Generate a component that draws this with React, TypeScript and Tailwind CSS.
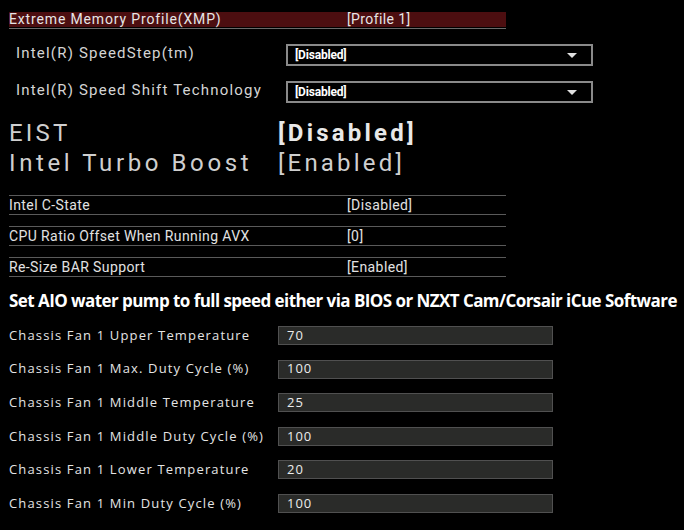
const biosFont = { fontFamily: "Roboto, 'Liberation Sans', sans-serif" };

const selects = [
  { label: "Intel(R) SpeedStep(tm)", value: "[Disabled]" },
  { label: "Intel(R) Speed Shift Technology", value: "[Disabled]" },
];

const lineRows = [
  { label: "Intel C-State", value: "[Disabled]" },
  { label: "CPU Ratio Offset When Running AVX", value: "[0]" },
  { label: "Re-Size BAR Support", value: "[Enabled]" },
];

const fans = [
  { label: "Chassis Fan 1 Upper Temperature", value: "70" },
  { label: "Chassis Fan 1 Max. Duty Cycle (%)", value: "100" },
  { label: "Chassis Fan 1 Middle Temperature", value: "25" },
  { label: "Chassis Fan 1 Middle Duty Cycle (%)", value: "100" },
  { label: "Chassis Fan 1 Lower Temperature", value: "20" },
  { label: "Chassis Fan 1 Min Duty Cycle (%)", value: "100" },
];

export default function App() {
  return (
    <div
      className="w-[684px] h-[530px] bg-black overflow-hidden pt-[12px] text-[#e6e6e6]"
      style={biosFont}
    >
      {/* XMP highlighted row */}
      <div className="ml-[9px] w-[497px] border-b border-[#6a6a6a] pb-[1px]">
        <div className="h-[15px] bg-[#4c0e10] flex items-center text-[14px] leading-[15px] tracking-[0.85px]">
          <span className="w-[338px]">Extreme Memory Profile(XMP)</span>
          <span className="tracking-[0.4px]">[Profile 1]</span>
        </div>
      </div>

      {/* dropdown settings */}
      <div className="mt-[15px] flex flex-col gap-[15px]">
        {selects.map((s) => (
          <div key={s.label} className="flex items-center h-[22px]">
            <span className="w-[286px] pl-[16px] text-[15px] tracking-[1.2px] text-[#d4d4d4] -mt-[3px]">
              {s.label}
            </span>
            <div className="w-[307px] h-[22px] border-2 border-[#8a8a8a] flex items-center justify-between pl-[7px] pr-[14px]">
              <span className="text-[12px] font-bold text-white tracking-[-0.2px]">
                {s.value}
              </span>
              <span className="w-0 h-0 border-l-[5px] border-r-[5px] border-t-[5px] border-l-transparent border-r-transparent border-t-[#e0e0e0]" />
            </div>
          </div>
        ))}
      </div>

      {/* big text */}
      <div className="mt-[15px] pl-[9px] text-[24px] leading-[30px] text-[#cfcfcf] tracking-[3.2px]">
        <div className="flex">
          <span className="w-[269px]">EIST</span>
          <span className="font-bold text-[#e8e8e8]">[Disabled]</span>
        </div>
        <div className="flex">
          <span className="w-[269px] tracking-[3.6px]">Intel Turbo Boost</span>
          <span>[Enabled]</span>
        </div>
      </div>

      {/* line rows */}
      <div className="mt-[17px] ml-[9px] w-[497px] flex flex-col gap-[11px]">
        {lineRows.map((r) => (
          <div
            key={r.label}
            className="h-[20px] border-y border-[#5a5a5a] flex items-center text-[14px] tracking-[0.4px] text-[#e2e2e2]"
          >
            <span className="w-[338px]">{r.label}</span>
            <span>{r.value}</span>
          </div>
        ))}
      </div>

      {/* note */}
      <div
        className="mt-[13px] pl-[9px] text-[17px] leading-[22px] font-bold text-white whitespace-nowrap"
        style={{ fontFamily: "'Open Sans', sans-serif", letterSpacing: "-0.56px" }}
      >
        Set AIO water pump to full speed either via BIOS or NZXT Cam/Corsair iCue Software
      </div>

      {/* fan settings */}
      <div
        className="mt-[14px] flex flex-col gap-[14.6px]"
        style={{ fontFamily: "'Open Sans', sans-serif" }}
      >
        {fans.map((f) => (
          <div key={f.label} className="flex items-center h-[19px]">
            <span className="w-[278px] pl-[9px] text-[13px] tracking-[1.15px] text-[#e4e4e4]">
              {f.label}
            </span>
            <div className="w-[275px] h-[19px] bg-[#2a2b29] border border-[#505050] flex items-center pl-[8px] text-[13px] tracking-[1px] text-[#ececec]">
              {f.value}
            </div>
          </div>
        ))}
      </div>
    </div>
  );
}
